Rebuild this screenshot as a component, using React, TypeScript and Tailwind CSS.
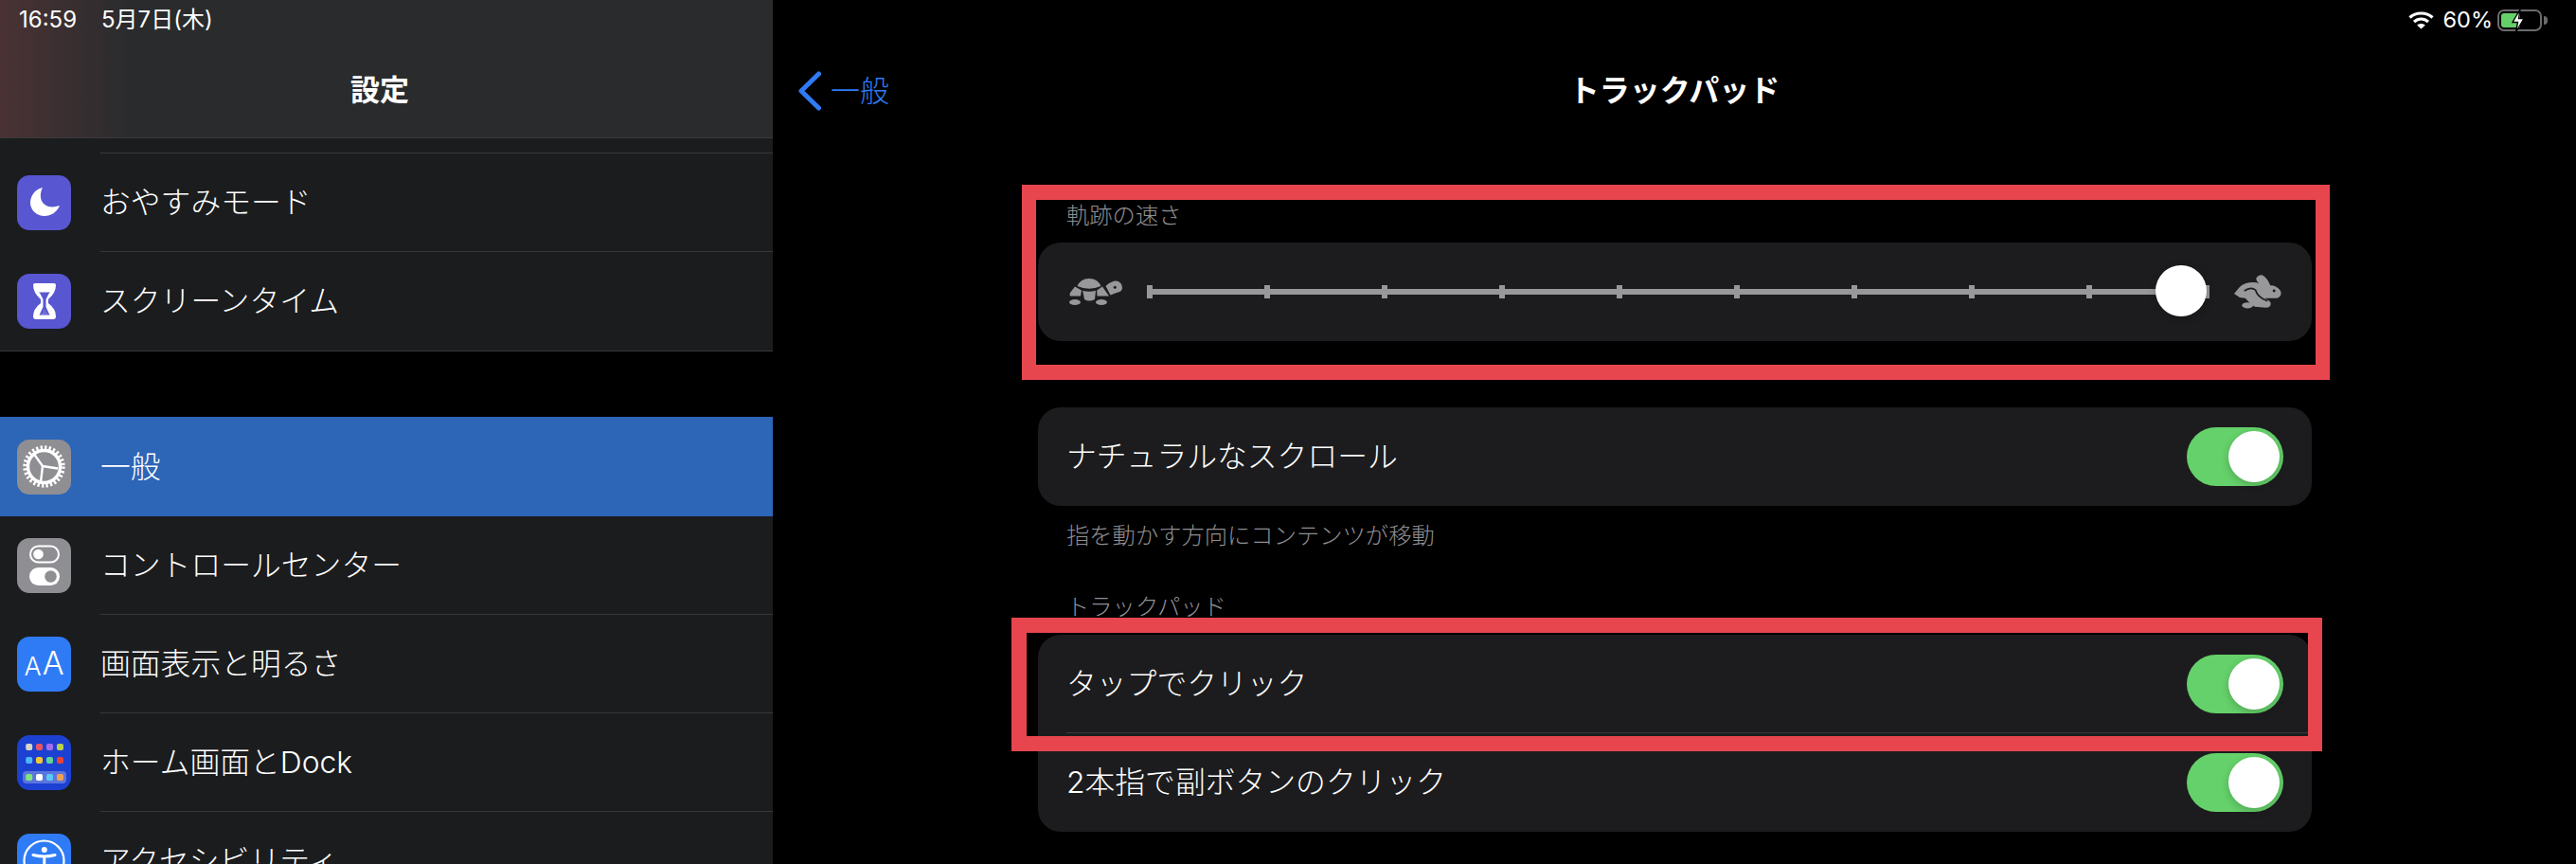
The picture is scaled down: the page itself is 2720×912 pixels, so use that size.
import type { ReactNode } from 'react';

const tileClass = 'w-[57px] h-[58px] rounded-[13px] shrink-0 overflow-hidden';

function MoonIcon() {
  return (
    <svg viewBox="0 0 57 58" className={`${tileClass} bg-[#5856d0]`}>
      <path d="M27 13C18 15 14 23 14 29C14 37 21 43 29 43C36 43 42 39 45 32C36 35 29 33 26 27C24 22 25 17 27 13Z" fill="#fff" />
    </svg>
  );
}

function HourglassIcon() {
  return (
    <svg viewBox="0 0 57 58" className={`${tileClass} bg-[#5856d0]`}>
      <path d="M19 10H39Q41 10 41 12Q41 20 33 27V31Q41 37 41 45Q41 48 38 48H20Q17 48 17 45Q17 37 25 31V27Q17 20 17 12Q17 10 19 10Z" fill="#fff" />
      <path d="M23 19.5H35L33.5 21L30.5 27V35L34.5 43.5H23.5L27.5 35V27L24.5 21Z" fill="#5856d0" />
      <path d="M28.9 37L33 43H25Z" fill="#fff" opacity="0.15" />
    </svg>
  );
}

function GearIcon() {
  return (
    <svg viewBox="0 0 57 58" className={`${tileClass} bg-[#8e8e93]`}>
      <circle cx="28.5" cy="28.5" r="20" fill="none" stroke="#fff" strokeWidth="4.4" strokeDasharray="2.3 2.188" />
      <circle cx="28.5" cy="28.5" r="17" fill="none" stroke="#fff" strokeWidth="3.4" />
      <path d="M27 28L17 14M27 28L43 30.5M27 28L25 45" stroke="#fff" strokeWidth="2.4" fill="none" />
    </svg>
  );
}

function SwitchesIcon() {
  return (
    <svg viewBox="0 0 57 58" className={`${tileClass} bg-[#8e8e93]`}>
      <rect x="14" y="8.5" width="30" height="17" rx="8.5" fill="none" stroke="#fff" strokeWidth="2" />
      <circle cx="22.5" cy="17" r="5.3" fill="#fff" />
      <rect x="13" y="31" width="32" height="19" rx="9.5" fill="#fff" />
      <circle cx="35.5" cy="40.5" r="6.3" fill="#8e8e93" />
    </svg>
  );
}

function TextSizeIcon() {
  return (
    <div className={`${tileClass} bg-[#2f7bf6] flex items-end justify-center pb-[13px] text-white font-light leading-none`}>
      <span className="text-[27px] leading-none">A</span>
      <span className="text-[34px] leading-none ml-[1px]">A</span>
    </div>
  );
}

const homeDots = [
  ['#d7d5c9', '#ea5566', '#a56eef', '#b9d24e'],
  ['#4fb7f5', '#f7c531', '#5fd39a', '#ea4335'],
  ['#7fe57a', '#ffffff', '#5ac8fa', '#f2a050'],
];

function HomeIcon() {
  const xs = [9.2, 20, 31, 42];
  const ys = [9, 23, 41];
  return (
    <svg viewBox="0 0 57 58" className={`${tileClass} bg-[#1c41d2]`}>
      <rect x="6" y="38" width="46" height="13" rx="4" fill="#fff" opacity="0.28" />
      {homeDots.map((row, r) =>
        row.map((c, i) => <rect key={c} x={xs[i]} y={ys[r]} width="7" height="7" rx="2" fill={c} />),
      )}
    </svg>
  );
}

function AccessIcon() {
  return (
    <svg viewBox="0 0 57 58" className={`${tileClass} bg-[#2f7bf6]`}>
      <circle cx="28.5" cy="28.5" r="21" fill="none" stroke="#fff" strokeWidth="2.2" />
      <circle cx="28.8" cy="17" r="3" fill="#fff" />
      <path d="M17 22.5Q29 25.5 40 22.5M28.8 24V33M28.8 33L25 45M28.8 33L32.5 45" stroke="#fff" strokeWidth="3" fill="none" strokeLinecap="round" />
    </svg>
  );
}

function SideRow({ icon, label, active, last }: { icon: ReactNode; label: string; active?: boolean; last?: boolean }) {
  return (
    <div className={`flex items-center pl-[18px] ${active ? 'h-[105px] bg-[#2d65b7]' : 'h-[104px]'}`}>
      {icon}
      <div
        className={`ml-[31px] flex-1 h-full flex items-center text-[31.8px] font-light text-white ${
          active || last ? '' : 'border-b border-[#38383a]'
        }`}
      >
        {label}
      </div>
    </div>
  );
}

function Toggle() {
  return (
    <div className="w-[102px] h-[62px] rounded-full bg-[#65d16a] flex items-center justify-end pr-[4px] shrink-0">
      <div className="w-[54px] h-[54px] rounded-full bg-white shadow-[0_3px_8px_rgba(0,0,0,0.2)]" />
    </div>
  );
}

function ToggleRow({ label, className = 'h-[104px]' }: { label: string; className?: string }) {
  return (
    <div className={`flex items-center justify-between pl-[30px] pr-[30px] ${className}`}>
      <span className="text-[31.8px] font-light text-white">{label}</span>
      <Toggle />
    </div>
  );
}

function Turtle() {
  return (
    <svg viewBox="0 0 56 28" className="w-[56px] h-[28px] shrink-0" fill="#98989b">
      <path d="M8.5 8Q12 0 21 0Q30 0 33.5 8Q21 13.5 8.5 8Z" />
      <path d="M6 8.5L13 12.5L12 18.5H1Q0 17 1 15Z" />
      <path d="M14.2 12.8Q21 14.5 28 12.8L27 22Q21 25 16 22Z" />
      <path d="M29.2 12.5L35 8.5L42 18.5H29.5Z" />
      <ellipse cx="6" cy="25" rx="6" ry="3" />
      <ellipse cx="34" cy="25" rx="6" ry="3" />
      <path d="M38.5 8Q44 2.5 50 2.5Q56 4 56 10Q56 14 50 15L43.5 17.5Z" />
      <circle cx="48.3" cy="9.3" r="1.5" fill="#1c1c1e" />
    </svg>
  );
}

function Rabbit() {
  return (
    <svg viewBox="0 0 51 36" className="w-[50px] h-[36px] shrink-0" fill="#98989b">
      <path d="M0 20L6 13Q12 7 24 8L27 9Q23 6 24 3Q26 0 30 0Q35 2 39 11Q46 11 50 17Q52 23 46 25L33 25L38 28Q41 31 38 34Q37 35 34 35L22 34Q16 30 12 25L6 24Z" />
      <ellipse cx="14.5" cy="32.6" rx="6" ry="3.2" />
      <path d="M11 17Q18 12 23 16Q25 24 36 28" stroke="#1c1c1e" strokeWidth="1.7" fill="none" />
      <circle cx="43" cy="17" r="1.5" fill="#1c1c1e" />
    </svg>
  );
}

function SpeedSlider() {
  return (
    <div className="relative w-[1122px] h-[14px] flex items-center justify-between">
      <div className="absolute inset-x-0 h-[6px] bg-[#98989b]" />
      {Array.from({ length: 10 }, (_, i) => (
        <div key={i} className="relative w-[6px] h-[14px] bg-[#98989b]" />
      ))}
      <div className="absolute left-[1065px] top-[-21px] w-[54px] h-[54px] rounded-full bg-white shadow-[0_2px_10px_rgba(0,0,0,0.2)]" />
    </div>
  );
}

function StatusIcons() {
  return (
    <div className="flex items-center">
      <svg viewBox="0 0 27 20" className="w-[27px] h-[20px]" fill="none" stroke="#fff" strokeWidth="3.2">
        <path d="M1.5 7.5C8 1.5 19 1.5 25.5 7.5" />
        <path d="M6 12C10.5 8 16.5 8 21 12" />
        <path d="M13.5 19.5L9.2 15.6C11.7 13.6 15.3 13.6 17.8 15.6Z" fill="#fff" stroke="none" />
      </svg>
      <span className="ml-[10px] text-[23.5px] leading-none">60%</span>
      <div className="ml-[5px] relative w-[47px] h-[23px] rounded-[7px] border-2 border-[#6b6b6d] p-[2px]">
        <div className="w-[20px] h-full bg-[#65d16a] rounded-l-[3px]" />
        <svg viewBox="0 0 16 26" className="absolute left-[12px] top-[-3px] w-[16px] h-[26px]">
          <path d="M10 1L2 14.5H7.5L5.5 25L14 10.5H8.5Z" fill="#fff" stroke="#000" strokeWidth="1.4" />
        </svg>
      </div>
      <div className="ml-[2px] w-[4px] h-[9px] rounded-r-full bg-[#6b6b6d]" />
    </div>
  );
}

export default function App() {
  return (
    <div
      lang="ja"
      className="relative flex h-[912px] w-[2720px] overflow-hidden bg-black text-white [font-family:Inter,'Noto_Sans_CJK_JP',sans-serif]"
    >
      {/* Sidebar */}
      <aside className="w-[816px] shrink-0 flex flex-col">
        <header className="h-[146px] shrink-0 border-b border-[#3a3a3c] bg-linear-to-r from-[#4a3234] to-[#2a2b2d] to-[17%] flex flex-col">
          <div className="flex items-center h-[42px] pl-[20px] text-[24px] leading-none">
            <span>16:59</span>
            <span className="ml-[26px]">5月7日(木)</span>
          </div>
          <div className="flex-1 flex items-center justify-center pt-[4px] pr-[14px] text-[31px] font-semibold">設定</div>
        </header>

        <section className="bg-[#1b1c1e] border-b border-[#38383a]">
          <div className="h-[15px]" />
          <div className="ml-[106px] h-px bg-[#38383a]" />
          <SideRow icon={<MoonIcon />} label="おやすみモード" />
          <SideRow icon={<HourglassIcon />} label="スクリーンタイム" last />
        </section>

        <div className="h-[69px] shrink-0" />

        <section className="flex-1 bg-[#1b1c1e]">
          <SideRow icon={<GearIcon />} label="一般" active />
          <SideRow icon={<SwitchesIcon />} label="コントロールセンター" />
          <SideRow icon={<TextSizeIcon />} label="画面表示と明るさ" />
          <SideRow icon={<HomeIcon />} label="ホーム画面とDock" />
          <SideRow icon={<AccessIcon />} label="アクセシビリティ" />
        </section>
      </aside>

      {/* Detail pane */}
      <main className="flex-1 flex flex-col">
        <header className="h-[145px] shrink-0 flex flex-col">
          <div className="flex justify-end items-center h-[42px] pr-[30px]">
            <StatusIcons />
          </div>
          <div className="grid grid-cols-3 items-center h-[42px] mt-[30px] px-[27px]">
            <div className="flex items-center text-[#2f7bf6]">
              <svg viewBox="0 0 24 42" className="w-[24px] h-[42px]" fill="none" stroke="#2f7bf6" strokeWidth="5" strokeLinecap="round" strokeLinejoin="round">
                <path d="M21.5 3L3 21L21.5 39" />
              </svg>
              <span className="ml-[10px] text-[31px] font-light">一般</span>
            </div>
            <div className="text-center text-[32px] font-semibold whitespace-nowrap">トラックパッド</div>
          </div>
        </header>

        <div className="pt-[66px] pl-[280px] pr-[279px]">
          <div className="h-[32px] pl-[30px] text-[24.3px] leading-[32px] font-light text-[#8e8e93]">軌跡の速さ</div>
          <div className="mt-[13px] h-[104px] rounded-[24px] bg-[#1c1c1e] flex items-center pl-[33px] gap-[26px]">
            <Turtle />
            <SpeedSlider />
            <Rabbit />
          </div>

          <div className="mt-[70px] rounded-[24px] bg-[#1c1c1e]">
            <ToggleRow label="ナチュラルなスクロール" />
          </div>
          <div className="mt-[15px] h-[32px] pl-[30px] text-[24.3px] leading-[32px] font-light text-[#8e8e93]">指を動かす方向にコンテンツが移動</div>

          <div className="mt-[43px] h-[32px] pl-[30px] text-[24.3px] leading-[32px] font-light text-[#8e8e93]">トラックパッド</div>
          <div className="mt-[14px] rounded-[24px] bg-[#1c1c1e]">
            <ToggleRow label="タップでクリック" className="h-[103px]" />
            <div className="ml-[30px] h-px bg-[#3a3a3c]" />
            <ToggleRow label="2本指で副ボタンのクリック" />
          </div>
        </div>
      </main>

      {/* Red highlight boxes drawn over the screenshot */}
      <div className="absolute left-[1079px] top-[195px] w-[1381px] h-[206px] border-x-[15px] border-y-[16px] border-[#e8464e]" />
      <div className="absolute left-[1068px] top-[652px] w-[1384px] h-[141px] border-y-[16px] border-l-[16px] border-r-[15px] border-[#e8464e]" />
    </div>
  );
}
